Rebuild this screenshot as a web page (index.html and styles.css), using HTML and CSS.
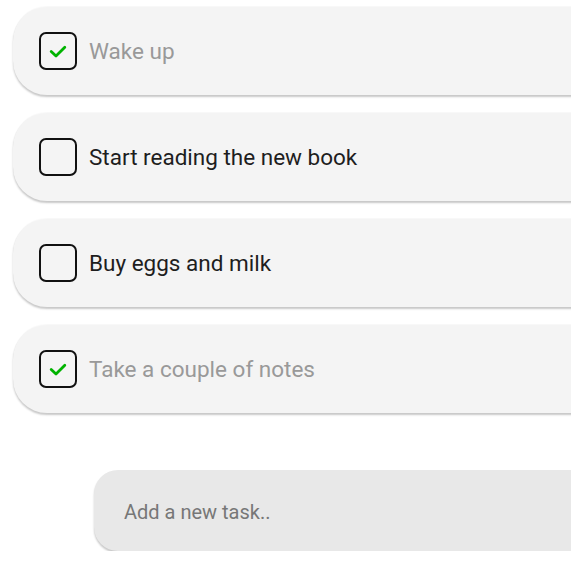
FILE: index.html
```html
<!DOCTYPE html>
<html>
<head>
<meta charset="utf-8">
<link rel="stylesheet" href="styles.css">
</head>
<body>
<div class="app">
  <ul class="list">
    <li class="task done">
      <span class="box"><svg class="check" viewBox="0 0 20 20" width="20" height="20"><path d="M3.2 10.4 L8 15 L16.8 6.2" fill="none" stroke="#00b300" stroke-width="2.8" stroke-linecap="round" stroke-linejoin="round"/></svg></span>
      <span class="label">Wake up</span>
    </li>
    <li class="task">
      <span class="box"></span>
      <span class="label">Start reading the new book</span>
    </li>
    <li class="task">
      <span class="box"></span>
      <span class="label">Buy eggs and milk</span>
    </li>
    <li class="task done">
      <span class="box"><svg class="check" viewBox="0 0 20 20" width="20" height="20"><path d="M3.2 10.4 L8 15 L16.8 6.2" fill="none" stroke="#00b300" stroke-width="2.8" stroke-linecap="round" stroke-linejoin="round"/></svg></span>
      <span class="label">Take a couple of notes</span>
    </li>
  </ul>
  <div class="add">
    <input class="add-input" type="text" placeholder="Add a new task..">
  </div>
</div>
</body>
</html>
```
FILE: styles.css
```css
html, body {
  margin: 0;
  padding: 0;
  background: #ffffff;
  overflow: hidden;
}
body {
  font-family: Roboto, "Liberation Sans", sans-serif;
}
.app {
  width: 640px;
  padding: 7px 0 0 13px;
}
.list {
  list-style: none;
  margin: 0;
  padding: 0;
  display: flex;
  flex-direction: column;
  gap: 18px;
}
.task {
  height: 88px;
  box-sizing: border-box;
  background: #f4f4f4;
  border-radius: 34px;
  box-shadow: 0 2px 2px rgba(0,0,0,0.22), 0 -1px 1px rgba(0,0,0,0.03);
  display: flex;
  align-items: center;
  padding-left: 26px;
  gap: 12px;
}
.box {
  width: 38px;
  height: 38px;
  box-sizing: border-box;
  border: 2px solid #111;
  border-radius: 7px;
  display: flex;
  align-items: center;
  justify-content: center;
  flex: none;
}
.label {
  font-size: 22.5px;
  color: #1e1e1e;
}
.done .label {
  color: #999999;
}
.add {
  margin: 57px 0 0 81px;
}
.add-input {
  display: block;
  width: 100%;
  height: 81px;
  box-sizing: border-box;
  border: none;
  outline: none;
  background: #e8e8e8;
  border-radius: 24px;
  box-shadow: 0 2px 2px rgba(0,0,0,0.22);
  padding: 2px 0 0 30px;
  font-family: Roboto, "Liberation Sans", sans-serif;
  font-size: 20px;
  color: #333;
}
.add-input::placeholder {
  color: #777777;
}
```
